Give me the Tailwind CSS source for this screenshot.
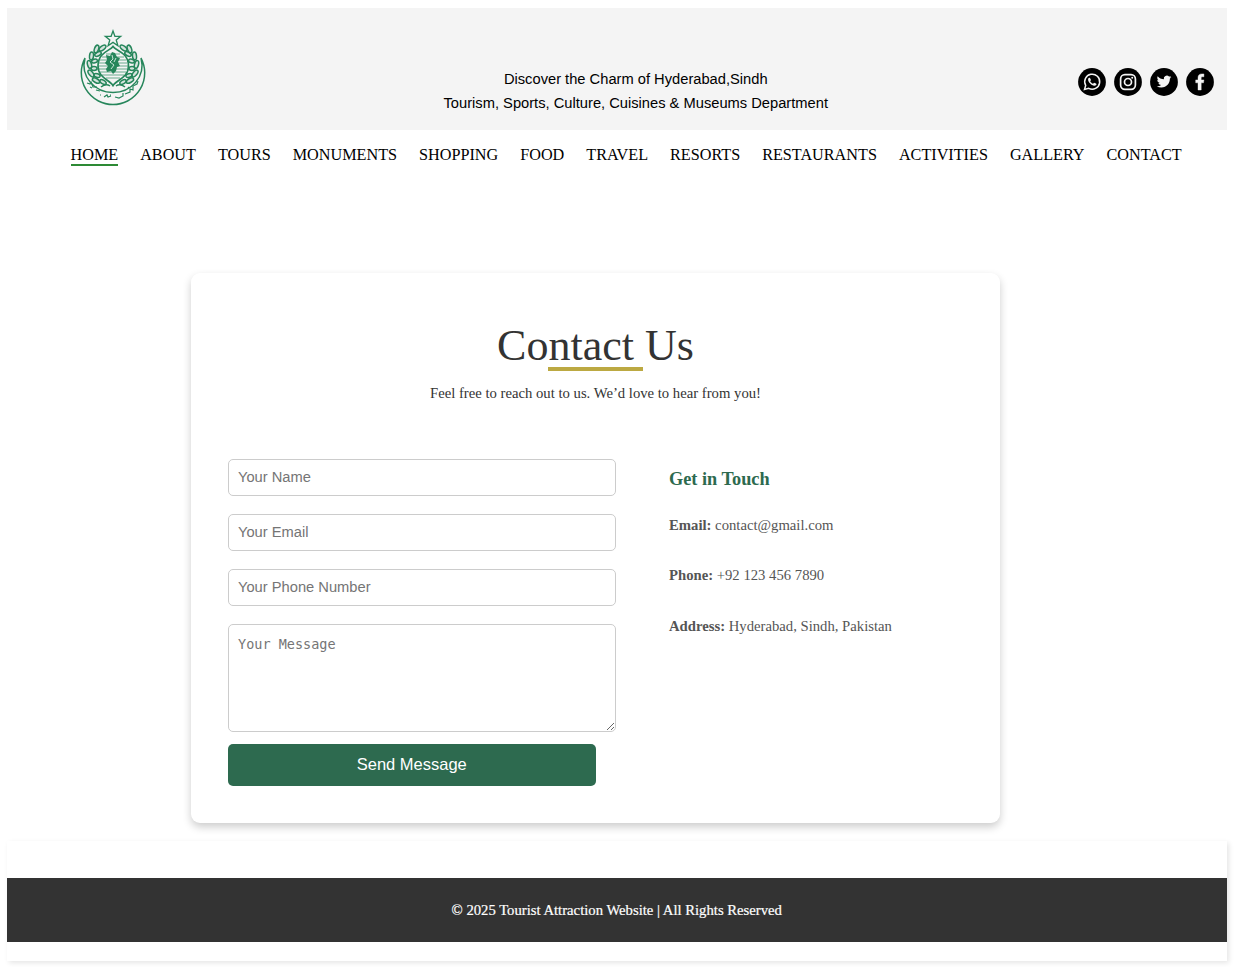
<!DOCTYPE html>
<html lang="en">
<head>
<meta charset="utf-8">
<title>Contact Us</title>
<script src="https://cdn.jsdelivr.net/npm/@tailwindcss/browser@4"></script>
</head>
<body class="h-[967px] overflow-hidden bg-white pl-[7px] pr-[7.500px] pt-2 font-['Liberation_Serif',serif]">
<header class="flex h-[122px] items-start justify-between bg-[#f4f4f4] pl-[73px] pr-[13px] text-black">
  <svg class="mt-[21px] h-[78px] w-[66px] shrink-0" viewBox="80 29 66 78" fill="none" stroke="#26865b" stroke-width="1">
    <path d="M113 31l1.900 5.300h5.800l-4.500 3.700 1.700 5.700-4.900-3.300-4.900 3.300 1.700-5.700-4.500-3.700h5.800z" stroke-width="1.300"/>
    <path d="M85 58A31.700 31.700 0 1 0 141 58C146 77 131 92.500 113 92.500S80 77 85 58Z" stroke-width="1.500"/>
    <path d="M113 46.500C110 51 98 52 98 66c0 12 12 14 15 19.500 3-5.500 15.500-7.500 15.500-19.500 0-14-12.500-15-15.500-19.500Z" stroke-width="1.700"/>
    <path d="M106 54h14M102 57h22M100 60h26M99 63h28M98 66h30M99 69h28M100 72h26M102 75h22M106 78h14" stroke-width=".9" opacity=".75"/>
    <path d="M106 55l4 1 2-4 3 1 2 4 3 1-2 4 2 4-3 1-1 4-3 3-2-3-4 1-1-3 2-3-3-3 2-3z" fill="#26865b" stroke="none"/>
    <path d="M112 55l1 4-3 3 4 3-3 4M116 58l-2 4" stroke="#d9eee4" stroke-width=".9"/>
    <g id="laurel" fill="#26865b" fill-opacity=".15" stroke-width="1.500">
      <ellipse cx="102.500" cy="48" rx="4" ry="2" transform="rotate(-38 102.500 48)"/>
      <ellipse cx="96.500" cy="49" rx="4" ry="2" transform="rotate(-70 96.500 49)"/>
      <ellipse cx="98" cy="54" rx="3.500" ry="1.900" transform="rotate(-25 98 54)"/>
      <ellipse cx="91.500" cy="56" rx="4" ry="2" transform="rotate(-85 91.500 56)"/>
      <ellipse cx="94.500" cy="61" rx="3" ry="1.900" transform="rotate(-15 94.500 61)"/>
      <ellipse cx="89.500" cy="64.500" rx="4" ry="2" transform="rotate(75 89.500 64.500)"/>
      <ellipse cx="94" cy="68.500" rx="3" ry="1.900"/>
      <ellipse cx="91" cy="73.500" rx="4" ry="2" transform="rotate(50 91 73.500)"/>
      <ellipse cx="97" cy="75.500" rx="3.200" ry="1.800" transform="rotate(15 97 75.500)"/>
      <ellipse cx="96" cy="80.500" rx="4" ry="2" transform="rotate(30 96 80.500)"/>
      <ellipse cx="103" cy="82" rx="3.500" ry="1.800" transform="rotate(30 103 82)"/>
      <path d="M101 87q5-4 9-1" fill="none"/>
    </g>
    <use href="#laurel" transform="translate(226 0) scale(-1 1)"/>
    <path d="M87 83l3 1 1-2 2 5 4 0M96 90l4 1M104 97l3-2 1 2 3-1M115 97l4 1 4-2 0-3M125 94l5-2 0-3 3 1 0-4 4-2 1-3M110 95h1M100 95h1M128 87l1 1M90 87l2 1" stroke-width="1.200"/>
  </svg>
  <p class="mt-[59px] pl-[48px] text-center font-['Liberation_Sans',sans-serif] text-[14.700px] leading-6">Discover the Charm of Hyderabad,Sindh<br>Tourism, Sports, Culture, Cuisines &amp; Museums Department</p>
  <div class="mt-[60px] flex gap-2">
    <svg class="size-7" viewBox="0 0 28 28" fill="none" stroke="#f4f4f4"><circle cx="14" cy="14" r="13.900" fill="#000" stroke="none"/><path d="M6.500 21.500l1.200-4.100a7.500 7.500 0 1 1 3 2.900z" stroke-width="1.500"/><path d="M11.300 9.700c-.6 0-1.300.8-1.200 2 .2 2.400 3.400 5.800 6.200 6 1.300.1 2.200-.8 2.200-1.700 0-.4-2.200-1.500-2.500-1.300l-.9 1.100c-.8-.1-2.600-1.700-2.900-2.600l.7-.9c.2-.3-.8-2.500-1.100-2.600z" fill="#f4f4f4" stroke="none"/></svg>
    <svg class="size-7" viewBox="0 0 28 28" fill="none" stroke="#f4f4f4" stroke-width="1.700"><circle cx="14" cy="14" r="13.900" fill="#000" stroke="none"/><rect x="6.600" y="6.600" width="14.800" height="14.800" rx="4.300"/><circle cx="14" cy="14" r="3.500"/><circle cx="18.200" cy="9.800" r="1" fill="#f4f4f4" stroke="none"/></svg>
    <svg class="size-7" viewBox="0 0 28 28"><circle cx="14" cy="14" r="13.900"/><path transform="translate(6.700 6.300) scale(.61)" fill="#f4f4f4" d="M23.950 4.570a10 10 0 0 1-2.820.77 4.960 4.960 0 0 0 2.160-2.720c-.95.550-2 .95-3.130 1.180a4.920 4.920 0 0 0-8.380 4.480C7.690 8.100 4.070 6.130 1.640 3.160a4.820 4.820 0 0 0-.67 2.480c0 1.710.87 3.210 2.190 4.090a4.900 4.900 0 0 1-2.230-.61v.06a4.920 4.920 0 0 0 3.950 4.830 5 5 0 0 1-2.210.08 4.940 4.940 0 0 0 4.600 3.420A9.870 9.870 0 0 1 0 19.540a14 14 0 0 0 7.550 2.210c9.050 0 14-7.500 14-13.980 0-.21 0-.42-.02-.63a9.940 9.940 0 0 0 2.460-2.550z"/></svg>
    <svg class="size-7" viewBox="0 0 28 28"><circle cx="14" cy="14" r="13.900"/><path fill="#f4f4f4" stroke="#f4f4f4" stroke-width=".4" d="M12 22v-7.200H9.700v-2.900H12V9.800C12 7 13.500 5.900 15.800 5.900h2.100v2.900h-1.400c-1 0-1.300.5-1.300 1.300v1.800h2.700l-.4 2.900h-2.300V22z"/></svg>
  </div>
</header>
<nav class="ml-[63.500px] mt-[14px] flex h-6 gap-[22px] whitespace-nowrap text-[16.200px] leading-[22px] text-black">
  <a class="h-[22px] border-b-2 border-[#2d8a35]">HOME</a><a>ABOUT</a><a>TOURS</a><a>MONUMENTS</a><a>SHOPPING</a><a>FOOD</a><a>TRAVEL</a><a>RESORTS</a><a>RESTAURANTS</a><a>ACTIVITIES</a><a>GALLERY</a><a>CONTACT</a>
</nav>
<main class="ml-[184px] mt-[105px] h-[550px] w-[809px] rounded-[9px] bg-white px-[37px] shadow-[0_4px_8px_rgba(0,0,0,0.2)]">
  <div class="flex flex-col items-center text-[#333]">
    <h1 class="mt-[47px] h-[47px] text-[44px] leading-[52px]">Contact Us</h1>
    <div class="h-1 w-[95px] bg-[#bca942]"></div>
    <p class="mt-[12px] text-[14.700px] leading-5">Feel free to reach out to us. We’d love to hear from you!</p>
  </div>
  <div class="mt-[55.500px] flex gap-[53px]">
    <form class="flex w-[388px] flex-col font-['Liberation_Sans',sans-serif] text-[14.700px]">
      <input class="mb-[18px] h-[37px] rounded-[5px] border border-[#ccc] px-[9px] placeholder:text-[#757575]" placeholder="Your Name">
      <input class="mb-[18px] h-[37px] rounded-[5px] border border-[#ccc] px-[9px] placeholder:text-[#757575]" placeholder="Your Email">
      <input class="mb-[18px] h-[37px] rounded-[5px] border border-[#ccc] px-[9px] placeholder:text-[#757575]" placeholder="Your Phone Number">
      <textarea class="h-[108px] resize-y rounded-[5px] border border-[#ccc] px-[9px] py-[9px] font-['DejaVu_Sans_Mono',monospace] text-[13.500px] leading-5 placeholder:text-[#757575]" placeholder="Your Message"></textarea>
      <button type="button" class="mt-3 h-[42px] w-[367.500px] rounded-[5px] bg-[#2d6a4f] text-[16.500px] text-white">Send Message</button>
    </form>
    <section class="pt-[9px] text-[14.700px] leading-5 text-[#555]">
      <h2 class="text-[18.300px] font-bold leading-[22px] text-[#2d6a4f]">Get in Touch</h2>
      <p class="mt-[25px]"><b>Email:</b> contact@gmail.com</p>
      <p class="mt-[30px]"><b>Phone:</b> +92 123 456 7890</p>
      <p class="mt-[31px]"><b>Address:</b> Hyderabad, Sindh, Pakistan</p>
    </section>
  </div>
</main>
<footer class="mt-[18px] h-[120px] bg-white pt-[37px] shadow-[2px_2px_5px_rgba(0,0,0,0.1)]">
  <div class="flex h-[64px] items-center justify-center bg-[#333] pt-px text-[14.700px] text-white [-webkit-text-stroke:0.2px_white]">© 2025 Tourist Attraction Website | All Rights Reserved</div>
</footer>
</body>
</html>
